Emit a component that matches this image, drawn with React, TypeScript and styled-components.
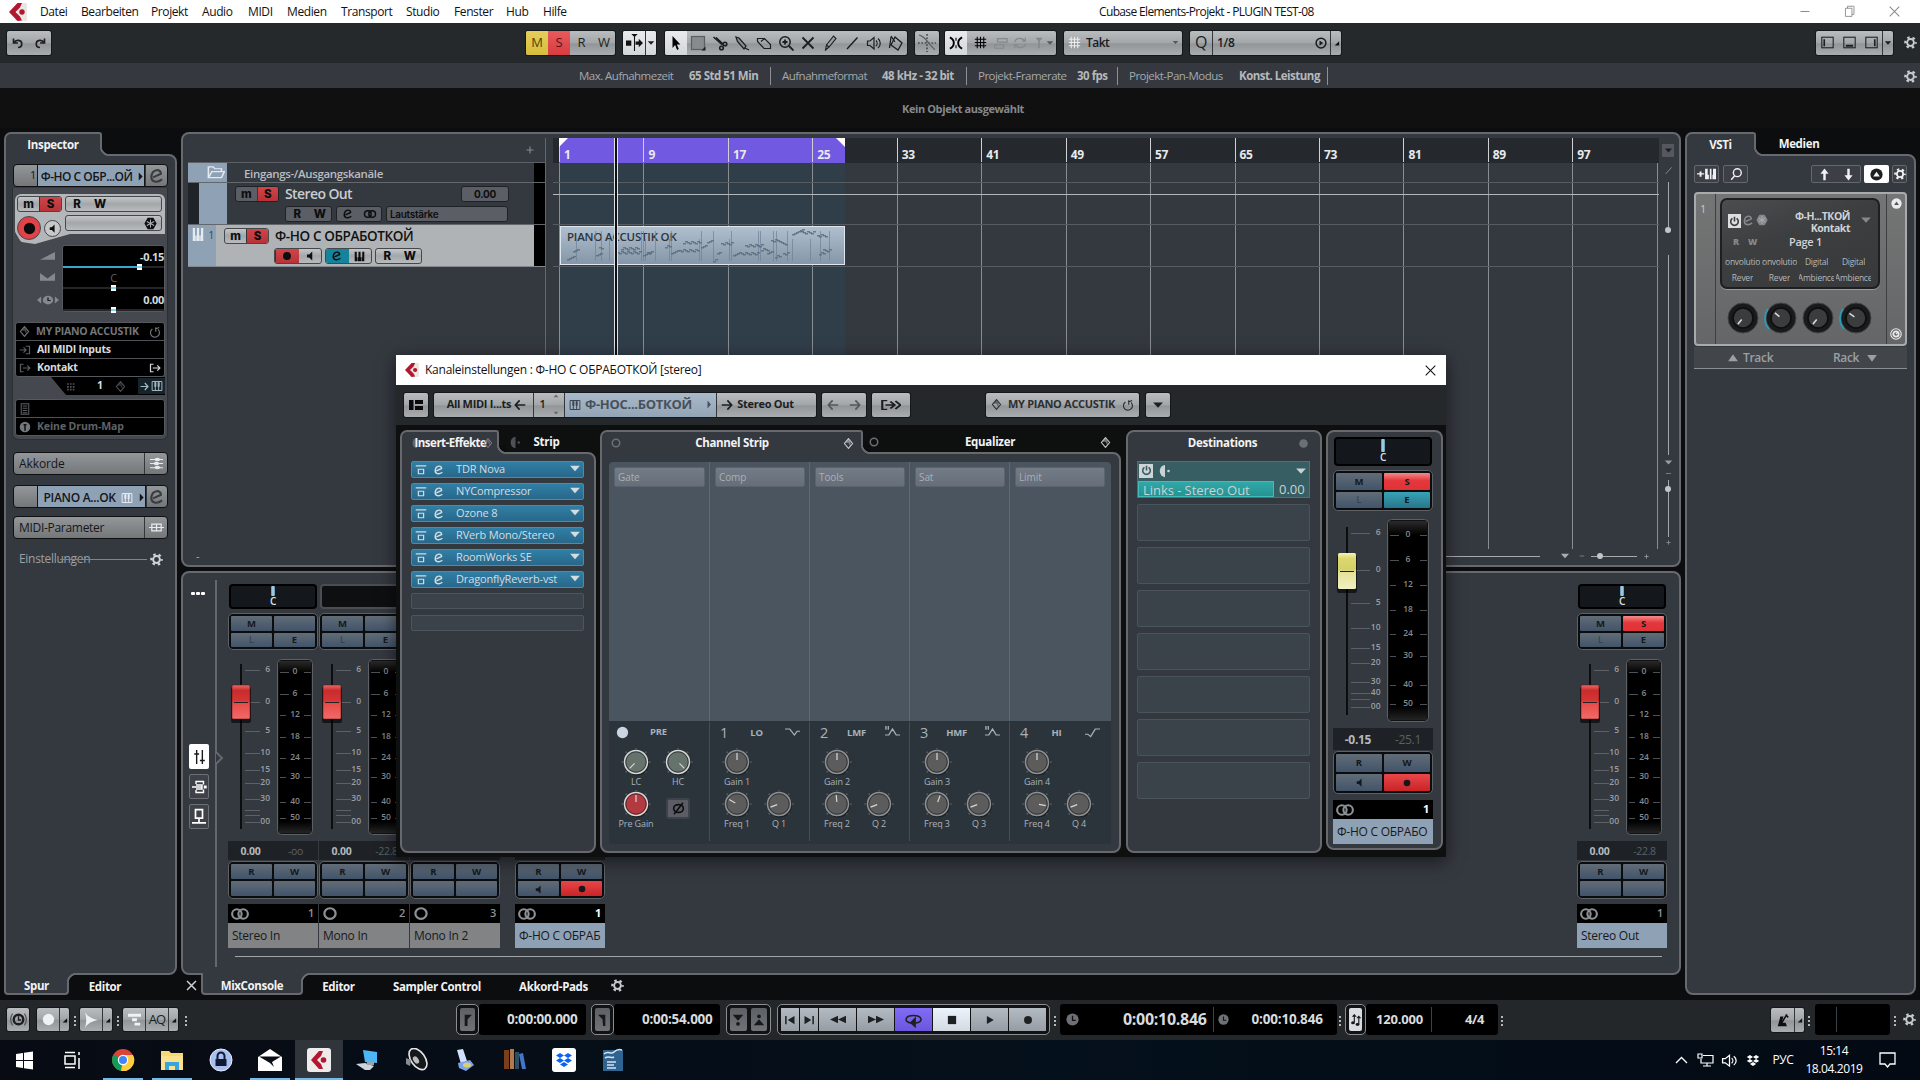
import React from "react";
import styled, { createGlobalStyle, css } from "styled-components";

const Global = createGlobalStyle`
  *{box-sizing:border-box}
  html,body{margin:0;padding:0;background:#0c0d0e;overflow:hidden}
  body{font-family:"Open Sans","Noto Sans",sans-serif;font-size:11px;letter-spacing:-0.3px;color:#c9cdd0;white-space:nowrap;line-height:1.1}
  svg{display:block;flex:none}
`;

const EDGE = "#67696f";
const PANEL = "#34383f";
const BLUE = "#8fa1b5";
const steel = "linear-gradient(#b9bdc0 0%,#a3a7aa 48%,#929699 54%,#a9adb0 100%)";

/* ---------- text ---------- */
const Txt = styled.span<{ $s?: number; $b?: number; $c?: string; $ls?: number; $ml?: number }>`
  font-size: ${(p) => p.$s ?? 11}px;
  font-weight: ${(p) => p.$b ?? 400};
  color: ${(p) => p.$c ?? "inherit"};
  letter-spacing: ${(p) => p.$ls ?? -0.3}px;
  margin-left: ${(p) => p.$ml ?? 0}px;
  flex: none;
`;

/* ---------- icons ---------- */
const shapes: Record<string, React.ReactNode> = {
  undo: <path d="M2 2v6h6M2.500 7.500C5 3 13 3.500 13 9c0 3.500-2.500 5-5 5" fill="none" stroke="currentColor" strokeWidth="2.200" />,
  redo: <path d="M14 2v6H8M13.500 7.500C11 3 3 3.500 3 9c0 3.500 2.500 5 5 5" fill="none" stroke="currentColor" strokeWidth="2.200" />,
  gear: (
    <g fill="none" stroke="currentColor">
      <circle cx="8" cy="8" r="4.200" strokeWidth="2.400" />
      <circle cx="8" cy="8" r="6.300" strokeWidth="2.800" strokeDasharray="3 3.597" strokeDashoffset="1.500" />
    </g>
  ),
  edit: <path d="M4.500 9.200L11.500 6C11.500 1.500 4 1.500 3 8c-.6 5.500 5 6.500 9.500 3" fill="none" stroke="currentColor" strokeWidth="1.900" />,
  keys: (
    <g fill="none" stroke="currentColor" strokeWidth="1.300">
      <path d="M1.500 2h13v12h-13zM5.800 3v11M10.200 3v11" />
      <path d="M5.800 3v6M10.200 3v6" strokeWidth="2.600" />
    </g>
  ),
  keysSolid: <path d="M1 1h3v8H5v6H1zM6.500 1h3v8h.8v6H5.700V9h.8zM12 1h3v14h-4V9h1z" fill="currentColor" />,
  arrow: <path d="M4 1v12l3-3 2.200 5 2-1-2.200-4.500H13z" fill="currentColor" />,
  range: (
    <g>
      <rect x="1.500" y="1.500" width="13" height="13" fill="#888b8e" stroke="#5c5f62" strokeWidth="1.200" />
      <path d="M15.500 11.500v4h-4z" fill="currentColor" />
    </g>
  ),
  split: <g fill="none" stroke="currentColor" strokeWidth="1.600"><path d="M1.500 2l9 8M4 2.500L11 9" /><circle cx="13" cy="9" r="1.800" /><circle cx="9.500" cy="13" r="1.800" /></g>,
  glue: <path d="M2 2l3 1 7 8-2 3L3.500 6.500zM11 13l4 2" fill="#8c9093" stroke="currentColor" strokeWidth="1.300" />,
  erase: <path d="M1.500 3.500h7l6 6v4H8l-6.500-7z M8.500 3.500L5 6.500" fill="none" stroke="currentColor" strokeWidth="1.200" />,
  zoom: <g fill="none" stroke="currentColor" strokeWidth="1.500"><circle cx="7" cy="7" r="5.200" /><path d="M4.500 7h5M7 4.500v5M11 11l4.500 4.500" strokeWidth="1.800" /></g>,
  cross: <path d="M2.500 2.500l11 11M13.500 2.500l-11 11" fill="none" stroke="currentColor" strokeWidth="1.800" />,
  pencil: <path d="M11.500 1l-7 9-1 5 3.500-3L14 3.500zM4.500 10l2.500 2" fill="#9a9ea1" stroke="currentColor" strokeWidth="1.100" />,
  line: <path d="M3 14L13.500 2.500" fill="none" stroke="currentColor" strokeWidth="1.400" />,
  speaker: <path d="M1.500 6v4.500h2.500l4 3.500V2.500L4 6zM10 5.500c1.500 1.500 1.500 4 0 5.500M12 3.500c3 2.500 3 7 0 9.500" fill="none" stroke="currentColor" strokeWidth="1.200" />,
  bucket: <path d="M7 2l7 6-4 7-7-5zM3 1l4 6M3 2L1.500 13" fill="none" stroke="currentColor" strokeWidth="1.300" />,
  xfade: <g fill="none" stroke="currentColor"><path d="M8 0v16M0 8h16" strokeDasharray="1.500 1.500" /><path d="M1 1c6 1 8 8 14 13" strokeWidth="1.200" stroke="#606468" /></g>,
  snap: <g fill="none" stroke="currentColor" strokeWidth="2.200"><path d="M1 1.500c3 1.500 4.500 3.500 4.500 6.500S4 13 1 14.500M15 1.500c-3 1.500-4.500 3.500-4.500 6.500s1.500 5 4.500 6.500" /><path d="M8 2v3.500M8 10.500V14" strokeWidth="1.300" /></g>,
  hash: <path d="M4 1v14M12 1v14M1 4h14M1 12h14M8 1v14M1 8h14" fill="none" stroke="currentColor" strokeWidth="1.300" />,
  gridrel: <path d="M4 3h11v4H4zM1 10h10v4H1z" fill="none" stroke="currentColor" strokeWidth="1.300" />,
  cycle2: <path d="M2 7c1-5 9-6 11-1M14 2v4h-4M14 9c-1 5-9 6-11 1M2 14v-4h4" fill="none" stroke="currentColor" strokeWidth="1.400" />,
  tee: <path d="M3 2h9L8.500 6v9h-2V6z" fill="currentColor" />,
  tri: <path d="M1.500 4.500h13L8 11.500z" fill="currentColor" />,
  triUp: <path d="M1.500 13h13L8 2z" fill="currentColor" />,
  triDn: <path d="M1.500 3h13L8 14z" fill="currentColor" />,
  triR: <path d="M4 1v14l9-7z" fill="currentColor" />,
  corner: <path d="M14 5v10H4z" fill="currentColor" />,
  autoscroll: <g fill="currentColor"><path d="M0 6h5v5H0zM9 7h3V4.500l4 4-4 4V10H9zM5 0h6L8 3z" /><path d="M7.500 2h1v14h-1z" /></g>,
  applyq: <g fill="none" stroke="currentColor" strokeWidth="2"><circle cx="8" cy="8" r="6.500" /><path d="M6 4.500v7L11 8z" fill="currentColor" stroke="none" /></g>,
  spk: <path d="M4 6h3l4-4v12L7 10H4z" fill="currentColor" />,
  dot: <circle cx="8" cy="8" r="5.300" fill="currentColor" />,
  ring: <circle cx="8" cy="8" r="5" fill="none" stroke="currentColor" strokeWidth="2" />,
  stereo: <g fill="none" stroke="currentColor" strokeWidth="1.700"><circle cx="5.500" cy="8" r="3.800" /><circle cx="10.500" cy="8" r="3.800" /></g>,
  freeze: <g><path d="M4.500 1h7L15.500 8l-4 7h-7L.5 8z" fill="currentColor" /><path d="M8 3v10M3.500 5.500l9 5M12.500 5.500l-9 5" stroke="#a9adb0" strokeWidth="1.300" /></g>,
  vol: <path d="M0 14L16 3v11z" fill="currentColor" />,
  pan: <path d="M0 3l8 8 8-8v11H0z" fill="currentColor" />,
  delay: <g fill="currentColor"><path d="M0 8l3-4v8zM16 8l-3-4v8z" /><ellipse cx="8" cy="8" rx="3.800" ry="5" /><path d="M8 5v3.500h2" stroke="#222" fill="none" /></g>,
  diamond: <g><path d="M8 .8L14 8l-6 7.200L2 8z" fill="none" stroke="currentColor" strokeWidth="1.500" /><path d="M8 1L3 7h5l3 6V6z" fill="currentColor" opacity=".55" /></g>,
  reload: <path d="M4.500 4A6 6 0 1 0 12 4.500M9 1.500v6M13.500 2l-5 2" fill="none" stroke="currentColor" strokeWidth="1.500" />,
  into: <path d="M1 8h8M6 4.500L9.500 8 6 11.500M9 3h5v10H9" fill="none" stroke="currentColor" strokeWidth="1.600" />,
  outof: <path d="M6 3H2v10h4M5 8h9M11 4.500L14.500 8 11 11.500" fill="none" stroke="currentColor" strokeWidth="1.600" />,
  grid9: <path d="M2 2h3v3H2zM7 2h3v3H7zM12 2h3v3h-3zM2 7h3v3H2zM7 7h3v3H7zM12 7h3v3h-3zM2 12h3v3H2zM7 12h3v3H7zM12 12h3v3h-3z" fill="currentColor" />,
  sheet: <path d="M3 1h10v14H3zM5 4h6M5 7h6M5 10h6M5 13h6" fill="none" stroke="currentColor" strokeWidth="1.400" />,
  drum: <g><circle cx="8" cy="8" r="7" fill="currentColor" /><path d="M8 5v8M6 5h4" stroke="#111" strokeWidth="2" /></g>,
  chords: <g fill="currentColor"><path d="M0 2.500h16v1.200H0zM0 7.500h16v1.200H0zM0 12.500h16v1.200H0z" /><ellipse cx="9" cy="3" rx="3.500" ry="2.100" /><ellipse cx="8" cy="8" rx="3.500" ry="2.100" /><ellipse cx="9" cy="13" rx="3.500" ry="2.100" /></g>,
  params: <path d="M0 8h16M3 4.500h10v7H3zM8 4.500v7" fill="none" stroke="currentColor" strokeWidth="1.300" />,
  folder: <path d="M2 13V2h4l1.500 2H13v3M2 13.500L5 7h10.500L13 13.500z" fill="none" stroke="currentColor" strokeWidth="1.300" />,
  mixer: <path d="M4.500 1v14M11.500 1v14M1.500 5h6M8.500 11.500h6" fill="none" stroke="currentColor" strokeWidth="1.700" />,
  inserts: <path d="M1 8h10M5 5V2.500h7.500v3M5 11v2.500h7.500v-3M13.500 7.200h1.500v1.600h-1.500zM5 6h6v4H5" fill="none" stroke="currentColor" strokeWidth="1.400" />,
  console: <path d="M4.500 1.500h7v8h-7zM8 10v3.500M1 14h14" fill="none" stroke="currentColor" strokeWidth="1.700" />,
  bypass: <path d="M1 2.500h14M4.500 7h7v6h-7z" fill="none" stroke="currentColor" strokeWidth="1.600" />,
  half: <g fill="currentColor"><path d="M8 1v14A6 7 0 0 1 8 1z" /><circle cx="12" cy="8" r="1.500" /></g>,
  power: <path d="M5 3.500a5.500 5.500 0 1 0 6 0M8 1v7" fill="none" stroke="currentColor" strokeWidth="2.300" />,
  arrL: <path d="M15 8H2M7.500 1.800L1.800 8l5.700 6.200" fill="none" stroke="currentColor" strokeWidth="2.200" />,
  arrR: <path d="M1 8h13M8.500 1.800L14.200 8l-5.700 6.200" fill="none" stroke="currentColor" strokeWidth="2.200" />,
  layout: <path d="M1 3h4.500v10H1zM7 3h8v4H7zM7 9h8v4H7z" fill="currentColor" />,
  search: <g fill="none" stroke="currentColor" strokeWidth="1.600"><circle cx="9.500" cy="6.500" r="4.500" /><path d="M6.500 10L2.500 14.500" /></g>,
  addkeys: <path d="M0 7h2.200V4.500h1.600V7H6v1.800H3.800v2.700H2.200V8.800H0zM6.800 1H9v8h1v6H6.800zM10.800 1h1.400v14h-1.400zM13.500 1H16v14h-3V9h.5z" fill="currentColor" />,
  up: <path d="M8 .5l5 6.500H9.500v8h-3V7H3z" fill="currentColor" />,
  down: <path d="M8 15.500L13 9H9.500V1h-3v8H3z" fill="currentColor" />,
  eject: <g><circle cx="8" cy="8" r="7.500" fill="currentColor" /><path d="M4 10.500h8L8 4.500z" fill="#f5f5f5" /></g>,
  ejectL: <g><circle cx="8" cy="8" r="7.500" fill="currentColor" /><path d="M4.500 10h7L8 5z" fill="#555" /></g>,
  dial: <g fill="none" stroke="currentColor" strokeWidth="1.500"><circle cx="8" cy="8" r="7" /><circle cx="8" cy="8" r="3.600" strokeWidth="2.400" /><path d="M8 8l3-3" /></g>,
  clock: <g><circle cx="8" cy="8" r="7.500" fill="currentColor" /><path d="M8 3.500V9h4" fill="none" stroke="#111" strokeWidth="1.600" /></g>,
  rtz: <path d="M1.500 2.500h2v11h-2zM14 2.500v11L5 8z" fill="currentColor" />,
  rte: <path d="M12.500 2.500h2v11h-2zM2 2.500v11l9-5.500z" fill="currentColor" />,
  rew: <path d="M8 2.500v11L0 8zM16 2.500v11L8 8z" fill="currentColor" />,
  ffw: <path d="M0 2.500v11L8 8zM8 2.500v11L16 8z" fill="currentColor" />,
  loop: <g fill="none" stroke="currentColor" strokeWidth="1.500"><path d="M6 11C-2 10 0 3.500 8 3.500s10 6.500 2 7.500" /><path d="M9.500 6.500v8L5.500 10.800z" fill="currentColor" /></g>,
  stop: <path d="M2.500 2.500h11v11h-11z" fill="currentColor" />,
  play: <path d="M3 1.500v13L14 8z" fill="currentColor" />,
  metro: <g><path d="M2 15L5 4h3.500L6.500 11H11l1.500 4z" fill="currentColor" /><path d="M6 12L12.500 1.500M11 2l3 3" stroke="currentColor" strokeWidth="1.700" fill="none" /></g>,
  locL: <path d="M3 1h13L8 7v9H3z" fill="currentColor" />,
  locR: <path d="M0 1h13v15H9L8 7z" fill="currentColor" />,
  punchI: <g fill="currentColor"><path d="M1 1h14L8 9z" /><circle cx="8" cy="13" r="2.500" /></g>,
  punchO: <g fill="currentColor"><path d="M1 15h14L8 7z" /><circle cx="8" cy="3" r="2.500" /></g>,
  constrain: <g fill="none" stroke="currentColor"><circle cx="8" cy="8" r="4.500" strokeWidth="2.200" /><path d="M8 5v3.500h2.500" strokeWidth="1.300" /><path d="M2.500 2.500C0 5.500 0 10.500 2.500 13.500M13.500 2.500c2.500 3 2.500 8 0 11" strokeWidth="1.200" stroke="#55585b" /></g>,
  burst: <path d="M0 0c2 3 5 6 16 8-11 2-14 5-16 8 2-5 2-11 0-16z" fill="currentColor" />,
  bars: <path d="M0 1h16v3.500H0zM5 6.500h6v3.500H5zM8 12h7v3.500H8z" fill="currentColor" />,
  note: <g fill="currentColor"><path d="M5 1h1.500v10H5zM11 4h1.500v10H11z" /><ellipse cx="4" cy="11.500" rx="2.500" ry="2" /><ellipse cx="10" cy="14" rx="2.500" ry="1.900" /><path d="M2.500 3.500L5.700 0 9 3.500zM8.500 5.500L11.700 2 15 5.500z" /></g>,
  winL: <g fill="none" stroke="currentColor" strokeWidth="1.300"><rect x="1" y="1.500" width="14" height="13" /><path d="M4 4v8.500" strokeWidth="2" /></g>,
  winB: <g fill="none" stroke="currentColor" strokeWidth="1.300"><rect x="1" y="1.500" width="14" height="13" /><path d="M3.500 12h9" strokeWidth="2.400" /></g>,
  winR: <g fill="none" stroke="currentColor" strokeWidth="1.300"><rect x="1" y="1.500" width="14" height="13" /><path d="M12 4v8.500" strokeWidth="2" /></g>,
  phase: <g fill="none" stroke="currentColor" strokeWidth="2"><ellipse cx="8" cy="8" rx="6" ry="4.800" /><path d="M2.500 15L13.500 1" /></g>,
  loShelf: <path d="M0 4h5l5 8 3-5h3" fill="none" stroke="currentColor" strokeWidth="1.400" />,
  hiShelf: <path d="M0 11h3l3 3 5-10h5" fill="none" stroke="currentColor" strokeWidth="1.400" />,
  bell: <path d="M1 0v5M3.500 0v5M0 12h4l4-8 4 8h4" fill="none" stroke="currentColor" strokeWidth="1.400" />,
  goto: <path d="M5 3H1v10h4M3.500 8h7M7.500 4L11 8l-3.500 4M11.500 3.500L15.500 8l-4 4.500" fill="none" stroke="currentColor" strokeWidth="1.700" />,
  minus: <path d="M2 8h12" stroke="currentColor" strokeWidth="1.500" />,
  plus: <path d="M1 8h14M8 1v14" stroke="currentColor" strokeWidth="2.200" />,
  restore: <path d="M3 4h8v10H3zM5.500 4V1.500h8V11.500H11" fill="none" stroke="currentColor" strokeWidth="1.100" />,
  thinX: <path d="M1 1l14 14M15 1L1 15" fill="none" stroke="currentColor" strokeWidth="1.500" />,
};
type IconProps = { n: string; s?: number; w?: number; h?: number; c?: string };
const Icon = ({ n, s = 14, w, h, c = "currentColor" }: IconProps) => (
  <svg width={w ?? s} height={h ?? s} viewBox="0 0 16 16" preserveAspectRatio="none" style={{ color: c }}>
    {shapes[n]}
  </svg>
);
const CubaseLogo = ({ s = 18 }: { s?: number }) => (
  <svg width={s} height={s} viewBox="0 0 18 18">
    <path d="M10 0h8v18H6z" fill="#e9e6e4" />
    <path d="M0 9L8.500 0 13 0 11 4.500 6.500 9 11 13.500 13 17.500 8.500 18z" fill="#b3162f" />
    <circle cx="13" cy="9" r="2.700" fill="#b3162f" />
  </svg>
);

/* ---------- app frame ---------- */
const Screen = styled.div`
  position: relative; width: 1920px; height: 1080px; display: flex; flex-direction: column; overflow: hidden; background: #0c0d0e;
`;
const MenuBar = styled.div`
  height: 23px; background: #fff; color: #111; display: flex; align-items: center; padding-left: 9px; font-size: 12px;
`;
const MenuItem = styled.span<{ $w: number }>`width: ${(p) => p.$w}px; flex: none; font-size: 12px; letter-spacing: -0.4px;`;
const WinCtl = styled.div<{ $ml?: number }>`margin-left: ${(p) => p.$ml ?? 0}px; width: 11px; color: #8a8a8a; height: 16px; display:flex;align-items:center;`;

const ToolBar = styled.div`height: 40px; background: #25292c; display: flex; align-items: center; padding: 0 0 1px 7px;`;
const Group = styled.div<{ $w: number; $ml?: number; $h?: number }>`
  width: ${(p) => p.$w}px; margin-left: ${(p) => p.$ml ?? 0}px; height: ${(p) => p.$h ?? 24}px; flex: none;
  display: flex; background: ${steel}; border-radius: 2px; overflow: hidden; box-shadow: 0 0 0 1px #15181a;
`;
const tones: Record<string, string> = {
  light: "linear-gradient(#e8eaec,#d4d7d9)",
  yellow: "linear-gradient(#e6ce5c,#d6bd3c)",
  red: "linear-gradient(#e85a5c,#d83c40)",
  blue: "linear-gradient(#a9b9c9,#93a4b6)",
};
const Btn = styled.div<{ $w?: number; $t?: string; $c?: string; $sep?: boolean }>`
  ${(p) => (p.$w ? `width:${p.$w}px;flex:none` : "flex:1")};
  display: flex; align-items: center; justify-content: center; color: ${(p) => p.$c ?? "#1c1e20"};
  background: ${(p) => (p.$t ? tones[p.$t] : "none")};
  ${(p) => p.$sep && "border-left:1px solid #33373a;"}
  font-size: 13px;
`;
const Field = styled.div<{ $w: number; $sep?: boolean }>`
  width: ${(p) => p.$w}px; display: flex; align-items: center; padding: 0 3px 0 4px; color: #1a1c1e; font-weight: 600; font-size: 12px;
  ${(p) => p.$sep && "border-left:1px solid #33373a;"}
  & > :last-child { margin-left: auto; }
`;
const Push = styled.div`flex: 1;`;
const InfoLine = styled.div`height: 25px; background: #35393f; display: flex; align-items: center; padding: 1px 0 0 579px; color: #a4a8ab;`;
const InfoKey = styled.span<{ $w: number }>`width: ${(p) => p.$w}px; font-size: 11.500px; letter-spacing: -0.53px; flex: none;`;
const InfoVal = styled.span<{ $w: number }>`width: ${(p) => p.$w}px; font-size: 11.500px; letter-spacing: -0.5px; font-weight: 700; color: #b4b8bb; flex: none;
  height: 18px; line-height: 18px; border-right: 1px solid #8d9194; margin-right: 11px;`;
const StatusLine = styled.div`height: 40px; background: #101010; padding: 2px 0 0 6px; display: flex; align-items: center; justify-content: center; color: #85888b; font-weight: 700; font-size: 11px; letter-spacing:-0.4px;`;

const Workspace = styled.div`height: 872px; display: flex; gap: 4px; padding: 4px 4px 5px; background: #0c0d0e;`;
const Zone = styled.div<{ $w: number }>`width: ${(p) => p.$w}px; flex: none; display: flex; flex-direction: column;`;
const TabRow = styled.div<{ $h?: number }>`height: ${(p) => p.$h ?? 22}px; display: flex; flex: none; align-items: stretch;`;
const Tab = styled.div<{ $w: number; $on?: boolean; $bottom?: boolean; $ml?: number; $pt?: number }>`
  width: ${(p) => p.$w}px; margin-left: ${(p) => p.$ml ?? 0}px; flex: none; color: #f1f2f3; font-weight: 700; font-size: 11.500px; letter-spacing: -0.35px;
  display: flex; align-items: center; justify-content: center; padding-top: ${(p) => p.$pt ?? (p.$bottom ? 5 : p.$on ? 0 : 3)}px;
  ${(p) =>
    p.$on &&
    css`
      background: ${PANEL}; position: relative; z-index: 1; border: 2px solid ${EDGE};
      ${p.$bottom
        ? "border-top:0;border-radius:0 0 4px 4px;margin-top:-2px;padding-top:7px;"
        : "border-bottom:0;border-radius:7px 3px 0 0;margin-bottom:-2px;"}
      &::after {
        content: ""; position: absolute; right: -9px; ${p.$bottom ? "top:0" : "bottom:0"}; width: 9px; height: 9px;
        background: radial-gradient(circle at 100% ${p.$bottom ? "100%" : "0"}, #0c0d0e 6.700px, ${EDGE} 7.200px 8.800px, ${PANEL} 9.300px);
      }
    `}
`;
const Panel = styled.div<{ $r?: string }>`
  flex: 1; min-height: 0; background: ${PANEL}; border: 2px solid ${EDGE}; border-radius: ${(p) => p.$r ?? "8px"};
  display: flex; flex-direction: column;
`;

/* ---------- inspector ---------- */
const InspBar = styled.div<{ $mt: number }>`
  height: 23px; margin: ${(p) => p.$mt}px 7px 0; flex: none; display: flex; border: 1px solid #111; border-radius: 4px; overflow: hidden;
  background: linear-gradient(#94979a,#74777a);
`;
const InspCell = styled.div<{ $w?: number; $blue?: boolean; $end?: boolean }>`
  ${(p) => (p.$w ? `width:${p.$w}px` : "flex:1")}; display: flex; align-items: center; color: #14161a; font-size: 12px; gap: 5px;
  ${(p) => p.$blue && `background:${BLUE};border:solid #14161a;border-width:0 1px;font-weight:600;padding-top:2px;`}
  ${(p) => p.$end ? "justify-content:center;border-left:1px solid #33363a;color:#e8eaec;" : ""}
  padding-left: ${(p) => (p.$end ? 0 : 5)}px;
`;
const InspSection = styled.div`
  height: 252px; margin: 1px 7px 0 6px; background: #45484e; flex: none; padding: 6px 2px 0 2px; border: solid #2b2e33; border-width: 0 1px 1px; border-radius: 0 0 6px 6px;
`;
const InspDeck = styled.div`
  height: 50px; width: 150px; background: #b4b7ba; border-radius: 6px 6px 4px 14px; padding: 2px; display: grid; grid-template-columns: 45px 97px; column-gap: 3px; row-gap: 2px; grid-template-rows: 17px 26px;
  clip-path: polygon(0 0,100% 0,100% 40px,55px 40px,20px 100%,6px 96%,0 38px);
`;
const Pill = styled.div<{ $dark?: boolean; $w?: number; $h?: number; $ml?: number }>`
  height: ${(p) => p.$h ?? 16}px; ${(p) => p.$w && `width:${p.$w}px;`} margin-left: ${(p) => p.$ml ?? 0}px; flex: none; display: flex; border: 1px solid ${(p) => (p.$dark ? "#1f2225" : "#44474b")}; border-radius: 3px; overflow: hidden;
  background: ${(p) => (p.$dark ? "#5b5f65" : "linear-gradient(#c3c5c7,#a4a7a9 50%,#b9bbbd)")};
  color: #0d0e10; font-family: "Inter","Open Sans",sans-serif; font-weight: 800; font-size: 11.500px; letter-spacing: 0;
`;
const PillCell = styled.div<{ $t?: "red" | "teal"; $w?: number }>`
  ${(p) => (p.$w ? `width:${p.$w}px` : "flex:1")}; display: flex; align-items: center; justify-content: center;
  ${(p) => p.$t === "red" && "background:linear-gradient(#cf4549,#b73338);border-left:1px solid #33363a;"}
  ${(p) => p.$t === "teal" && "background:#14839b;"}
`;
const RoundRow = styled.div`display: flex; align-items: center; gap: 3px;`;
const Round = styled.div<{ $s: number; $red?: boolean }>`
  width: ${(p) => p.$s}px; height: ${(p) => p.$s}px; border-radius: 50%; display: flex; align-items: center; justify-content: center; color: #0b0b0c;
  background: ${(p) => (p.$red ? "radial-gradient(#e8484c,#dd4146 70%,#f08a8a)" : "#c6c8ca")}; border: 1px solid #44474b;
`;
const ValueDeck = styled.div`display: flex; margin-top: 1px; height: 67px;`;
const ValueIcons = styled.div`width: 47px; padding-left: 18px; display: flex; flex-direction: column; justify-content: space-around; align-items: center; color: #85888c;`;
const ValueBox = styled.div`flex: 1; background: #000; border-radius: 3px; border: 1px solid #55585d; display: flex; flex-direction: column;`;
const ValueLine = styled.div<{ $mid?: boolean }>`
  height: 21.600px; display: flex; align-items: flex-end; justify-content: ${(p) => (p.$mid ? "center" : "flex-end")};
  color: ${(p) => (p.$mid ? "#5b5e62" : "#d5d8da")}; font-weight: ${(p) => (p.$mid ? 400 : 700)}; font-size: 11px; line-height: 12px; padding-bottom: 3px; padding-top: 3px;
  border-bottom: 2px solid #232528; position: relative;
`;
const Handle = styled.i<{ $x: number; $fill?: boolean }>`
  position: absolute; left: ${(p) => p.$x}px; bottom: -4px; width: 5px; height: 6px; background: linear-gradient(#fff 30%,#7fd4f0 30% 70%,#fff 70%);
  ${(p) => p.$fill && `&::before{content:"";position:absolute;right:5px;top:2px;width:${p.$x}px;height:2px;background:#3aa7d0;}`}
`;
const ListBox = styled.div<{ $mt: number }>`margin-top: ${(p) => p.$mt}px; background: #000; border-radius: 3px; border: 1px solid #55585d;`;
const ListRow = styled.div<{ $dim?: boolean; $h?: number }>`
  height: ${(p) => p.$h ?? 18}px; display: flex; align-items: center; padding: 0 3px; gap: 6px; font-weight: 700; font-size: 10.500px; color: ${(p) => (p.$dim ? "#74777b" : "#d9dcde")};
  letter-spacing: -0.25px; & + & { border-top: 1px solid #4e5156; } & > svg:last-child:not(:first-child) { margin-left: auto; }
`;
const ChanRow = styled.div`
  height: 18px; margin-left: 36px; background: #000; display: flex; align-items: center; padding-left: 15px; clip-path: polygon(0 0,100% 0,100% 100%,15px 100%); color: #4e5156;
`;
const RouteKeys = styled.div`margin-left: 12px; height: 16px; width: 27px; background: #16232b; display: flex; align-items: center; justify-content: center; gap: 2px; color: #a7bac4;`;
const SettingsRow = styled.div`display: flex; align-items: center; margin: 11px 0 0 13px; height: 18px; color: #9da0a3;`;
const Rule = styled.div<{ $w?: number; $ml?: number; $c?: string }>`height: 1px; ${(p) => (p.$w ? `width:${p.$w}px;flex:none` : "flex:1")}; margin-left: ${(p) => p.$ml ?? 0}px; background: ${(p) => p.$c ?? "#808387"};`;

/* ---------- track list ---------- */
const ArrangePanel = styled(Panel)`flex: none; height: 435px;`;
const ArrRow = styled.div`flex: 1; min-height: 0; display: flex; padding-left: 5px;`;
const TrackList = styled.div`width: 358px; flex: none; border-right: 1px solid #63666b; display: flex; flex-direction: column; margin-top: 4px;`;
const ListHead = styled.div`height: 25px; display: flex; align-items: center; justify-content: flex-end; padding-right: 11px; color: #888b8f; border-bottom: 1px solid #5d6065; flex: none;`;
const TrackRow = styled.div<{ $h: number; $sel?: boolean }>`
  height: ${(p) => p.$h}px; flex: none; display: flex; border-bottom: 1px solid ${(p) => (p.$sel ? "#85898d" : "#63676b")}; background: ${(p) => (p.$sel ? "#b0b3b5" : PANEL)};
`;
const Stripe = styled.div<{ $w: number; $c?: string }>`width: ${(p) => p.$w}px; flex: none; background: ${(p) => p.$c ?? BLUE}; display: flex; align-items: flex-start; justify-content: flex-end; gap: 5px; color: #e3eaf0; padding: 2px;`;
const TrackMain = styled.div<{ $pl: number }>`flex: 1; padding: 3px 0 0 ${(p) => p.$pl}px; display: flex; flex-direction: column; gap: 4px;`;
const TrackLine = styled.div<{ $ml?: number; $gap?: number }>`display: flex; align-items: center; gap: ${(p) => p.$gap ?? 4}px; margin-left: ${(p) => p.$ml ?? 0}px; height: 16px;`;
const MeterStub = styled.div`width: 11px; flex: none; background: #000;`;

/* ---------- timeline ---------- */
const Timeline = styled.div`width: 1106px; margin: 4px 0 0 7px; flex: none; display: flex; flex-direction: column; position: relative; height: 411px;`;
const Ruler = styled.div`height: 25px; flex: none; display: flex; padding-left: 6px; background: linear-gradient(90deg,#25292d 6px,#7259e2 6px 292px,#25292d 292px);`;
const Bar = styled.div`width: 84.450px; flex: none; border-left: 1px solid #cfd1d3; height: 24px; padding: 11px 0 0 4px; color: #e8eaeb; font-weight: 700; font-size: 12px; line-height: 12px;`;
const LaneArea = styled.div`flex: 1; position: relative; background: linear-gradient(90deg,transparent 6px,#303e4a 6px 292px,transparent 292px);`;
const GridCols = styled.div`position: absolute; inset: 0; display: flex; padding-left: 6px;`;
const GridCol = styled.div`width: 84.450px; flex: none; border-left: 1px solid #898d91;`;
const Lane = styled.div<{ $h: number; $c?: string }>`height: ${(p) => p.$h}px; border-bottom: 1px solid ${(p) => p.$c ?? "#565c60"}; position: relative;`;
const Clip = styled.div`
  margin-left: 7px; width: 285px; height: 39px; position: relative; top: 1px; border: 1px solid #dbe6f0; background: linear-gradient(#afbfce,#8596a8);
  color: #2d343b; font-weight: 600; font-size: 11.500px; padding: 4px 0 0 6px; letter-spacing: -0.2px;
`;
const ClipNotes = styled.svg`position: absolute; left: 0; top: 0;`;
const Playhead = styled.div`position: absolute; left: 61px; top: 0; bottom: 0; width: 4px; background: #0e1013; border: solid #dfe2e4; border-width: 0 1px;`;
const LoopMark = styled.div<{ $x: number; $flip?: boolean }>`position: absolute; top: 0; left: ${(p) => p.$x}px; border: 9px solid transparent; border-width: 9px 9px 0 0; border-top-color: #fff; ${(p) => p.$flip && "transform:scaleX(-1);"}`;
const VScroll = styled.div`width: 14px; margin: 10px 0 0 2px; display: flex; flex-direction: column; align-items: center; color: #9a9da1; flex: none;`;
const DropBox = styled.div`width: 12px; height: 13px; background: #55595f; display: flex; align-items: center; justify-content: center; color: #1c1e20;`;
const VLine = styled.div<{ $h: number; $mt?: number }>`width: 1px; height: ${(p) => p.$h}px; margin-top: ${(p) => p.$mt ?? 0}px; background: #a5a8ab; flex: none;`;
const Knot = styled.div`width: 6px; height: 6px; border-radius: 50%; background: #c3c6c8; flex: none;`;
const HScroll = styled.div`height: 16px; flex: none; display: flex; align-items: center; color: #aaaeb1; padding: 0 0 0 13px; margin-bottom: 1px;`;

/* ---------- mixer ---------- */
const MixPanel = styled(Panel)`margin-top: 4px;`;
const MixBody = styled.div`flex: 1; min-height: 0; display: flex;`;
const MixRail = styled.div`width: 34px; margin-top: 7px; height: 387px; border-right: 2px solid #64676c; padding: 2px 6px 0 6px; display: flex; flex-direction: column; gap: 5px; color: #fff; font-weight: 700; flex:none;`;
const RailDots = styled.div`height: 157px; padding: 10px 0 0 2px; display: flex; gap: 1px; & i { width: 4px; height: 3px; background: #fff; border-radius: 1px; }`;
const RailBtn = styled.div<{ $on?: boolean }>`
  width: 20px; height: 25px; flex: none; border-radius: 2px; display: flex; align-items: center; justify-content: center;
  ${(p) => (p.$on ? "background:#fff;color:#17191b;" : "background:#3e4248;border:1px solid #6c7075;color:#fff;")}
`;
const RailNotch = styled.div`width: 9px; margin-left: -7px; padding-top: 178px;`;
const Strips = styled.div`display: flex; margin-top: 11px;`;
const Strip = styled.div<{ $w: number; $ml?: number }>`width: ${(p) => p.$w}px; margin-left: ${(p) => p.$ml ?? 0}px; flex: none; display: flex; flex-direction: column;`;
const PanBox = styled.div<{ $h: number; $off?: boolean }>`
  height: ${(p) => p.$h}px; margin: 0 1px; flex: none; border: 2px solid ${(p) => (p.$off ? "#4a4d52" : "#000")}; background: ${(p) => (p.$off ? "#0d0f10" : "#14181c")}; border-radius: 4px;
  display: flex; flex-direction: column; align-items: center; color: #dfe2e4; font-size: 10px; font-weight: 600; line-height: 11px;
  & i { width: 4px; height: ${(p) => p.$h / 2 - 2}px; background: linear-gradient(90deg,#5b8fae,#b4dbef,#5b8fae); border-radius: 1px; }
`;
const Block = styled.div<{ $h: number; $mt: number }>`
  height: ${(p) => p.$h}px; margin-top: ${(p) => p.$mt}px; flex: none; display: grid; grid-template: 1fr 1fr / 1fr 1fr; gap: 2px; padding: 2px; background: #0b0c0e; border: 1px solid #5d6065; border-radius: 5px;
`;
const blockTones: Record<string, string> = {
  red: "linear-gradient(#f28a8a,#e4373b 45%,#e03338)",
  rec: "linear-gradient(#e8474a,#c92428)",
  teal: "linear-gradient(#38a2b6,#27768a)",
};
const BlockBtn = styled.div<{ $t?: string; $dim?: boolean }>`
  background: ${(p) => (p.$t ? blockTones[p.$t] : "linear-gradient(#616c77,#42546a)")}; display: flex; align-items: center; justify-content: center; padding-top: 1px;
  border-radius: 1px; color: ${(p) => (p.$dim ? "#343c45" : "#15181b")}; font-weight: ${(p) => (p.$dim ? 400 : 700)}; font-size: 9.500px; letter-spacing: 0;
`;
const Values = styled.div<{ $h: number; $mt: number; $s: number }>`
  height: ${(p) => p.$h}px; margin-top: ${(p) => p.$mt}px; background: #1e2226; display: grid; grid-template-columns: 1fr 1fr; align-items: center; text-align: center; flex: none;
  font-size: ${(p) => p.$s}px; font-weight: 700; color: #b5b9bc; padding-top: 2px; & span + span { font-weight: 400; color: #5c6064; }
`;
const ChanHead = styled.div<{ $mt: number; $sel?: boolean }>`
  height: 19px; margin-top: ${(p) => p.$mt}px; background: #000; flex: none; display: flex; align-items: center; justify-content: space-between; padding: 0 4px 0 2px; color: ${(p) => (p.$sel ? "#fff" : "#8d9194")}; font-size: 11px; font-weight: ${(p) => (p.$sel ? 700 : 600)};
`;
const ChanName = styled.div<{ $in?: boolean }>`height: 25px; flex: none; background: ${(p) => (p.$in ? "#828385" : BLUE)}; color: #17191c; font-size: 12px; padding: 1px 4px 0; display: flex; align-items: center; overflow: hidden; letter-spacing: -0.25px;`;

type Marks = [number, string][];
const SM = {
  w: 90, h: 191, x: 13, t: 14, b: 179, tx: 17, tw: 15, lx: 42,
  cap: [4, 35, 18, 34],
  ticks: [[20, "6"], [52, "0"], [81, "5"], [103, "10"], [120, "15"], [133, "20"], [149, "30"], [160, ""], [165, ""], [172, "00"]] as Marks,
  m: [49, 9, 35, 175],
  mt: [[22, "0"], [44, "6"], [65, "12"], [87, "18"], [108, "24"], [127, "30"], [152, "40"], [168, "50"]] as Marks,
};
const LG = {
  w: 100, h: 217, x: 14, t: 16, b: 204, tx: 18, tw: 19, lx: 47.500,
  cap: [5, 42, 18, 36],
  ticks: [[22, "6"], [59, "0"], [92, "5"], [117, "10"], [137, "15"], [152, "20"], [171, "30"], [182, "40"], [188, ""], [196, "00"]] as Marks,
  m: [54, 8, 41, 202],
  mt: [[24, "0"], [49, "6"], [74, "12"], [99, "18"], [123, "24"], [145, "30"], [174, "40"], [193, "50"]] as Marks,
};
const Fader = ({ g, yellow }: { g: typeof SM; yellow?: boolean }) => {
  const [cx, cy, cw, ch] = g.cap;
  const [mx, my, mw, mh] = g.m;
  const id = yellow ? "capY" : "capR";
  return (
    <svg width={g.w} height={g.h} fontFamily="Open Sans" fontWeight="600" fontSize="8.500" letterSpacing="0">
      <defs>
        <linearGradient id={id} x1="0" y1="0" x2="0" y2="1">
          {yellow ? (
            <><stop offset="0" stopColor="#f6f4b4" /><stop offset=".15" stopColor="#dcd86e" /><stop offset=".45" stopColor="#d3d06a" /><stop offset=".55" stopColor="#e4e29c" /><stop offset="1" stopColor="#f2f0c0" /></>
          ) : (
            <><stop offset="0" stopColor="#ee6a68" /><stop offset=".16" stopColor="#c82c2c" /><stop offset=".45" stopColor="#d63434" /><stop offset=".55" stopColor="#e84c4a" /><stop offset="1" stopColor="#f06b68" /></>
          )}
        </linearGradient>
        <linearGradient id="well" x1="0" y1="0" x2="0" y2="1">
          <stop offset="0" stopColor="#2a2a2a" /><stop offset=".07" stopColor="#000" /><stop offset=".93" stopColor="#000" /><stop offset="1" stopColor="#242424" />
        </linearGradient>
      </defs>
      <rect x={g.x - 1} y={g.t} width="2" height={g.b - g.t} fill="#0c0d0f" />
      {g.ticks.map(([y, l], i) => (
        <g key={i}>
          <rect x={g.tx} y={y} width={g.tw} height="1" fill="#5d6166" />
          <text x={g.lx} y={y + 2} textAnchor="end" fill="#9a9ea2">{l}</text>
        </g>
      ))}
      <rect x={cx - 1} y={cy + 2} width={cw + 2} height={ch + 2} rx="2" fill="#000" opacity=".6" />
      <rect x={cx} y={cy} width={cw} height={ch} rx="1.500" fill={`url(#${id})`} stroke="#5a1212" strokeWidth={yellow ? 0 : 0.5} />
      <rect x={cx + 2} y={cy + ch / 2} width={cw - 4} height="1" fill="#222" />
      <rect x={mx + 0.5} y={my + 0.5} width={mw} height={mh} rx="4" fill="#111" stroke="#5d6065" />
      <rect x={mx + 2} y={my + 2} width={mw - 3} height={mh - 3} fill="url(#well)" />
      {g.mt.map(([y, l], i) => (
        <g key={i}>
          <rect x={mx + 3} y={y} width={l.length > 1 ? 6 : 9} height="1" fill="#4d5155" />
          <rect x={mx + mw - 8} y={y} width="7" height="1" fill="#4d5155" />
          <text x={mx + mw / 2 + 0.5} y={y + 2} textAnchor="middle" fill="#85898d">{l}</text>
        </g>
      ))}
    </svg>
  );
};
type ChanProps = {
  name: string; num: string; peak: string; vol?: string; big?: boolean; mono?: boolean; input?: boolean; solo?: boolean; edit?: boolean; armed?: boolean; ml?: number;
};
const Channel = ({ name, num, peak, vol = "0.00", big, mono, input, solo, edit, armed, ml }: ChanProps) => {
  const g = big ? LG : SM;
  return (
    <Strip $w={g.w} $ml={ml}>
      <PanBox $h={big ? 29 : 25} $off={mono}>{!mono && (<><i /><span>C</span></>)}</PanBox>
      <Block $h={big ? 41 : 37} $mt={4}>
        <BlockBtn>M</BlockBtn>
        <BlockBtn $t={solo ? "red" : undefined}>{solo ? "S" : ""}</BlockBtn>
        <BlockBtn $dim>L</BlockBtn>
        <BlockBtn $t={edit ? "teal" : undefined}>E</BlockBtn>
      </Block>
      <Fader g={g} yellow={big} />
      <Values $h={big ? 22 : 19} $mt={0} $s={big ? 12 : 10.5}><span>{vol}</span><span>{peak}</span></Values>
      <Block $h={big ? 43 : 38} $mt={1}>
        <BlockBtn>R</BlockBtn>
        <BlockBtn>W</BlockBtn>
        <BlockBtn>{armed && <Icon n="spk" s={11} />}</BlockBtn>
        <BlockBtn $t={armed ? "rec" : undefined}>{armed && <Icon n="dot" s={10} />}</BlockBtn>
      </Block>
      <ChanHead $mt={big ? 6 : 5} $sel={armed}><Icon n={mono ? "ring" : "stereo"} w={mono ? 18 : 20} h={mono ? 17 : 20} c="#8d9194" />{num}</ChanHead>
      <ChanName $in={input}>{name}</ChanName>
    </Strip>
  );
};

/* ---------- dialog ---------- */
const Dialog = styled.div`position: absolute; left: 396px; top: 355px; width: 1050px; height: 502px; background: #0e0f0f; box-shadow: 0 4px 16px rgba(0,0,0,.55); display: flex; flex-direction: column; z-index: 5;`;
const DlgTitle = styled.div`height: 30px; background: #fff; color: #111; display: flex; align-items: center; padding: 0 10px 0 9px; gap: 6px;`;
const DlgBar = styled.div`height: 40px; background: #25282b; display: flex; align-items: center; padding: 0 0 1px 8px;`;
const DlgBody = styled.div`flex: 1; display: flex; padding: 5px 0 4px 4px; gap: 4px;`;
const DlgCol = styled.div<{ $w: number; $ml?: number }>`width: ${(p) => p.$w}px; margin-left: ${(p) => p.$ml ?? 0}px; flex: none; display: flex; flex-direction: column;`;
const TabInner = styled.div<{ $w: number; $pl?: number }>`width: ${(p) => p.$w}px; flex: none; padding: 0 6px 0 ${(p) => p.$pl ?? 8}px; display: flex; align-items: center; justify-content: space-between; color: #85898d; & > span { color: #f2f3f4; }`;
const Slots = styled.div`padding: 7px 10px 7px 9px; display: flex; flex-direction: column; gap: 5px;`;
const Insert = styled.div<{ $on?: boolean }>`
  height: ${(p) => (p.$on ? 17 : 16)}px; margin-bottom: ${(p) => (p.$on ? 0 : 1)}px; border: 1px solid ${(p) => (p.$on ? "#3e90b8" : "#4d565e")}; border-radius: 2px; background: ${(p) => (p.$on ? "linear-gradient(#317ea5,#28688b)" : "#3b4249")};
  display: flex; align-items: center; padding: 0 2px 0 3px; color: #d5dce0; font-size: 11px; gap: 6px; letter-spacing: -0.1px; & > svg:last-child { margin: -2px 0 0 auto; }
`;
const StripArea = styled.div`margin: 8px 8px 0 7px; width: 502px; height: 259px; background: #4b555f; border-radius: 4px 4px 0 0; display: grid; grid-template-columns: repeat(5,100px); flex: none;`;
const StripCol = styled.div`& + & { border-left: 1px solid #5f6973; } padding: 5px 4px 0 5px;`;
const Module = styled.div`height: 20px; background: linear-gradient(#737b86,#666e79); border: 1px solid #5b646e; border-radius: 2px; color: #a9b0b6; font-size: 10px; padding: 1px 3px 0; display: flex; align-items: center; letter-spacing:-.1px;`;
const EqArea = styled.div`margin: 0 8px 0 7px; width: 502px; height: 123px; background: #2c343b; border-radius: 0 0 4px 4px; display: grid; grid-template-columns: repeat(5,100px); padding: 1px 0 3px;`;
const EqCol = styled.div`& + & { border-left: 1px solid #454d55; } display: flex; flex-direction: column;`;
const EqHead = styled.div<{ $pre?: boolean }>`
  height: 26px; padding: ${(p) => (p.$pre ? "0 42px 6px 5px" : "0 9px 4px 10px")}; display: flex; align-items: center; justify-content: space-between; color: #a6b2bc; font-weight: 700; font-size: 9.500px; letter-spacing: -.2px;
  & big { font-size: 14.500px; font-weight: 400; } & > svg:last-child { margin-top: -3px; }
`;
const KnobRow = styled.div`display: grid; grid-template-columns: 42px 42px; margin-left: 6px; height: 42px; justify-items: center;`;
const KnobCell = styled.div`display: flex; flex-direction: column; align-items: center; font-size: 9px; color: #a9b2ba; letter-spacing: -.1px; line-height: 12px;`;
const PhaseBtn = styled.div`width: 24px; height: 21px; margin-top: 8px; border-radius: 3px; background: #5a5d66; border: 2px solid #3e4249; display: flex; align-items: center; justify-content: center; color: #0d0e10;`;

const Knob = ({ a, tone = "#5c5c5c", rim = "#8e9092" }: { a: number; tone?: string; rim?: string }) => (
  <svg width="30" height="28" viewBox="-15 -14 30 28">
    {[-135, -90, -45, 0, 45, 90, 135].map((d) => (
      <rect key={d} x="-.6" y="-14.500" width="1.200" height="1.200" fill="#6d757c" transform={`rotate(${d})`} />
    ))}
    <circle r="12" cx="1" cy="1.500" fill="#15191c" opacity=".7" />
    <circle r="11.500" fill={tone} stroke={rim} strokeWidth="1.500" />
    <circle r="10.200" fill="none" stroke="#1d1f21" strokeWidth=".9" opacity=".7" />
    <path d="M0-2V-9" stroke="#d5d8da" strokeWidth="1.200" transform={`rotate(${a})`} />
  </svg>
);
const DestItem = styled.div`height: 37px; border: 1px solid #3f797c; background: #365e63; display: flex; flex-direction: column; justify-content: space-between; color: #c9d2d4; flex:none;`;
const DestTop = styled.div`display: flex; align-items: center; height: 16px; padding: 1px 2px 0 1px; gap: 5px; & > svg:last-child { margin-left: auto; }`;
const PowerBox = styled.div`width: 14px; height: 14px; background: #d0d4d6; color: #365e63; display: flex; align-items: center; justify-content: center;`;
const DestLine = styled.div`display: flex; height: 16px; align-items: center; font-size: 13px; letter-spacing: -.05px; & > b { font-weight: 400; width: 136px; height: 16px; line-height: 16px; background: linear-gradient(#31a8a8,#279292); border: 1px solid #3fbcbc; padding-left: 4px; margin-right: 5px; }`;
const DestSlot = styled.div`height: 37px; flex: none; border: 1px solid #4a545c; border-radius: 2px; background: #3b434a; margin-top: 1px;`;
const DestHead = styled(TabInner)`height: 23px;`;
const StripPanel = styled(Panel)`padding: 5px 6px 5px 5px; flex: none; height: 420px;`;

/* ---------- VSTi rack ---------- */
const RackTools = styled.div`display: flex; height: 18px; margin: 9px 7px 0; flex: none;`;
const RackBtn = styled.div<{ $w: number; $ml?: number; $on?: boolean }>`
  width: ${(p) => p.$w}px; margin-left: ${(p) => p.$ml ?? 0}px; flex: none; display: flex; align-items: center; justify-content: space-around; border-radius: 2px;
  ${(p) => (p.$on ? "background:#fff;color:#1c1e20;" : "background:#3c4046;border:1px solid #64686d;color:#eff1f2;")}
`;
const Rack = styled.div`height: 154px; margin: 9px 7px 0; flex: none; display: flex; border: 2px solid #a8aaab; border-radius: 4px; background: linear-gradient(#747575,#656667);`;
const RackNum = styled.div`width: 20px; border-right: 1px solid #3d3f41; padding: 9px 0 0 4px; color: #c5c8ca; font-size: 11px;`;
const RackMain = styled.div`width: 170px; padding: 4px 6px 0 4px; display: flex; flex-direction: column;`;
const RackSide = styled.div`flex: 1; border-left: 1px solid #3d3f41; display: flex; flex-direction: column; justify-content: space-between; align-items: center; padding: 4px 0; color: #e9ebec;`;
const Lcd = styled.div`height: 91px; background: linear-gradient(160deg,#4b4d4e,#3c3e3f 40%,#37393a); border: 2px solid #1d1f20; border-radius: 7px; color: #cfd2d4; padding: 12px 6px 0 5px; display: flex; flex-direction: column; box-shadow: 0 1px 0 #9a9c9d;`;
const LcdTop = styled.div`display: flex; gap: 1px; color: #85898c; height: 23px; flex: none; padding-left: 1px; padding-top: 2px;`;
const LcdPower = styled.div`width: 13px; height: 14px; background: #dcdedf; color: #3b3d3e; display: flex; align-items: center; justify-content: center;`;
const LcdNames = styled.div`margin-left: auto; text-align: right; color: #cfd2d4; font-weight: 700; font-size: 10.500px; line-height: 11.500px; margin-top: -3px; letter-spacing: -.45px;`;
const LcdMid = styled.div`display: flex; align-items: center; height: 14px; font-weight: 600; color: #d0d3d5; padding-left: 6px; & small { color: #85898c; font-size: 9px; width: 15px; font-weight: 800; }`;
const LcdGrid = styled.div`display: grid; grid-template-columns: repeat(4,37px); row-gap: 4px; margin-top: 7px; justify-items: center; font-size: 8.500px; line-height: 12px; color: #b4b7b9; margin-left: -3px; letter-spacing: -.25px; & span { max-width: 35px; overflow: hidden; display: flex; justify-content: center; }`;
const RackKnobs = styled.div`display: flex; justify-content: space-between; padding: 12px 7px 0 6px; `;
const RackFoot = styled.div`height: 22px; margin: 1px 7px 0; background: #42464b; border-bottom: 1px solid #8b8f93; display: flex; align-items: center; justify-content: space-between; padding: 0 29px 0 33px; color: #9aa0a4; font-weight: 600; font-size: 12px; flex:none; & span { display: flex; align-items: center; gap: 4px; }`;
const RackKnob = ({ a, arc }: { a: number; arc?: boolean }) => (
  <svg width="34" height="34" viewBox="-17 -17 34 34">
    <circle r="15" fill="#191a1b" stroke="#434445" />
    {arc && <path d="M-12 11A16 16 0 0 1-13-9" fill="none" stroke="#2b9cb8" strokeWidth="1.800" />}
    <circle r="10" fill="#3b3c3d" stroke="#0d0d0d" strokeWidth="1.500" />
    <path d="M0-2V-8" stroke="#d5d8da" strokeWidth="1.600" transform={`rotate(${a})`} />
  </svg>
);

/* ---------- bottom tabs, transport, taskbar ---------- */
const Transport = styled.div`height: 40px; background: #24272a; display: flex; align-items: center; padding: 0 0 1px 7px; flex: none;`;
const Dots = styled.div<{ $ml: number; $mr: number }>`width: 2px; height: 10px; margin: 2px ${(p) => p.$mr}px 0 ${(p) => p.$ml}px; background: repeating-linear-gradient(#b4b7ba 0 2px,transparent 2px 4px); flex: none;`;
const TimeBox = styled.div<{ $w: number; $ml?: number }>`width: ${(p) => p.$w}px; height: 31px; margin-left: ${(p) => p.$ml ?? 0}px; background: #000; border-radius: 3px; display: flex; align-items: center; flex: none; color: #d9dcde;`;
const LocBtn = styled.div<{ $w: number; $ml?: number }>`width: ${(p) => p.$w}px; margin-left: ${(p) => p.$ml ?? 0}px; height: 31px; border: 1px solid #8b8e91; border-radius: 5px; background: #101213; padding: 3px; display: flex; gap: 4px; flex: none;`;
const LocKey = styled.div<{ $lit?: boolean }>`flex: 1; background: ${(p) => (p.$lit ? "#d9dde1" : "linear-gradient(#5d6064,#6f7276)")}; border-radius: 2px; display: flex; align-items: center; justify-content: center; color: #16181a;`;
const TKeys = styled.div`width: 273px; margin-left: 6px; height: 31px; border: 1px solid #8b8e91; border-radius: 5px; background: #101213; padding: 3px; display: flex; gap: 1px; flex: none;`;
const TKey = styled.div<{ $w: number; $t?: "loop" | "stop" }>`
  width: ${(p) => p.$w}px; flex: none; display: flex; align-items: center; justify-content: center; color: #1e2124;
  background: ${(p) => (p.$t === "loop" ? "linear-gradient(#806cf5,#6b57dd)" : p.$t === "stop" ? "linear-gradient(#edf3fa,#d3dae2)" : "linear-gradient(#b3bac2,#969da5)")};
`;
const VSep = styled.div<{ $ml: number; $h?: number }>`width: 1px; height: ${(p) => p.$h ?? 25}px; margin-left: ${(p) => p.$ml}px; background: #3d4246; flex: none;`;
const Taskbar = styled.div`height: 40px; background: linear-gradient(90deg,#080b13,#04101b 55%,#030a14); display: flex; flex: none;`;
const TaskCell = styled.div<{ $w: number; $run?: boolean; $on?: boolean; $ml?: number }>`
  width: ${(p) => p.$w}px; margin-left: ${(p) => p.$ml ?? 0}px; flex: none; display: flex; align-items: center; justify-content: center; color: #fff;
  ${(p) => p.$on && "background:#30343b;"} border-bottom: 2px solid ${(p) => (p.$run || p.$on ? "#76b9ed" : "transparent")}; padding-top: 2px;
`;
const Tray = styled.div`margin-left: auto; display: flex; align-items: center; color: #fff; padding-right: 4px;`;
const TrayCell = styled.div<{ $w: number }>`width: ${(p) => p.$w}px; display: flex; flex-direction: column; align-items: center; justify-content: center; font-size: 12px; line-height: 18px; letter-spacing: -.4px;`;

const InfoPairs: [string, number, string, number][] = [
  ["Max. Aufnahmezeit", 110, "65 Std 51 Min", 82],
  ["Aufnahmeformat", 100, "48 kHz - 32 bit", 85],
  ["Projekt-Framerate", 99, "30 fps", 41],
  ["Projekt-Pan-Modus", 110, "Konst. Leistung", 89],
];
const Menus: [string, number][] = [["Datei", 41], ["Bearbeiten", 70], ["Projekt", 51], ["Audio", 46], ["MIDI", 39], ["Medien", 54], ["Transport", 65], ["Studio", 48], ["Fenster", 52], ["Hub", 37], ["Hilfe", 40]];
const tools = ["range", "split", "glue", "erase", "zoom", "cross", "pencil", "line", "speaker", "bucket"];
const bars = Array.from({ length: 14 }, (_, i) => 1 + i * 8);

const noteRuns: [number, number, number, number][] = [
  [6, 32, 8, -1], [12, 24, 6, -1], [35, 28, 5, -1], [38, 20, 3, 0], [56, 24, 24, 0], [60, 20, 18, 0], [82, 28, 8, -1], [86, 24, 6, 0], [104, 18, 5, 0], [110, 26, 8, -1],
  [118, 22, 20, 0], [122, 14, 18, 0], [140, 20, 6, -1], [146, 15, 5, -1], [152, 32, 3, 0], [156, 26, 3, -1], [160, 15, 12, 0], [172, 28, 6, -1], [178, 25, 20, 0], [184, 17, 18, 0], [200, 21, 8, 0],
  [206, 26, 6, -1], [210, 12, 10, 0], [214, 28, 5, 0], [220, 15, 6, 0], [222, 25, 6, 0], [231, 7, 12, -1], [240, 4, 14, 0], [256, 7, 10, 0], [258, 25, 6, 0], [262, 22, 8, 0],
];
const verticals = [15, 34, 40, 48, 80, 82, 84, 94, 108, 110, 138, 140, 152, 168, 170, 197, 199, 212, 215, 226, 231, 249, 259, 268];

const inserts = ["TDR Nova", "NYCompressor", "Ozone 8", "RVerb Mono/Stereo", "RoomWorks SE", "DragonflyReverb-vst"];
const eq: [string, string, string, number][] = [["1", "LO", "loShelf", -60], ["2", "LMF", "bell", -5], ["3", "HMF", "bell", 20], ["4", "HI", "hiShelf", 100]];

const Inspector = () => (
  <Zone $w={173}>
    <TabRow><Tab $w={98} $on>Inspector</Tab></TabRow>
    <Panel $r="0 8px 8px 0">
      <InspBar $mt={8}>
        <InspCell $w={24}><Txt $ml={11} $s={11}>1</Txt></InspCell>
        <InspCell $blue><Txt $s={12} $b={600} $ml={-2} $ls={-0.5}>Ф-НО С ОБР...ОЙ</Txt><Icon n="triR" w={7} h={9} /></InspCell>
        <InspCell $w={23} $end><Icon n="edit" s={18} c="#3a3d40" /></InspCell>
      </InspBar>
      <InspSection>
        <InspDeck>
          <Pill><PillCell>m</PillCell><PillCell $t="red">S</PillCell></Pill>
          <Pill><PillCell $w={22}>R</PillCell><PillCell $w={24}>W</PillCell></Pill>
          <RoundRow><Round $s={24} $red><Icon n="dot" s={17} /></Round><Round $s={17}><Icon n="spk" s={11} /></Round></RoundRow>
          <Pill><Push /><PillCell $w={22}><Icon n="freeze" s={13} /></PillCell></Pill>
        </InspDeck>
        <ValueDeck>
          <ValueIcons><Icon n="vol" w={15} h={11} /><Icon n="pan" w={15} h={11} /><Icon n="delay" w={22} h={14} /></ValueIcons>
          <ValueBox>
            <ValueLine>-0.15<Handle $x={74} $fill /></ValueLine>
            <ValueLine $mid>C<Handle $x={48} /></ValueLine>
            <ValueLine>0.00<Handle $x={48} /></ValueLine>
          </ValueBox>
        </ValueDeck>
        <ListBox $mt={10}>
          <ListRow $dim $h={17}><Icon n="diamond" s={11} />MY PIANO ACCUSTIK<Icon n="reload" s={12} /></ListRow>
          <ListRow><Icon n="into" s={12} c="#5a5d61" />All MIDI Inputs</ListRow>
          <ListRow><Icon n="outof" s={12} c="#5a5d61" />Kontakt<Icon n="outof" s={12} /></ListRow>
        </ListBox>
        <ChanRow><Icon n="grid9" s={9} /><Txt $ml={22} $b={700} $s={10.5} $c="#d9dcde">1</Txt><Push /><Icon n="diamond" s={11} /><RouteKeys><Icon n="arrR" s={9} /><Icon n="keys" s={12} /></RouteKeys></ChanRow>
        <ListBox $mt={4}>
          <ListRow $dim $h={17}><Icon n="sheet" s={12} c="#5a5d61" /></ListRow>
          <ListRow $dim><Icon n="drum" s={12} /><Txt $b={700} $s={10.5} $ls={-0.1} $c="#5f6266">Keine Drum-Map</Txt></ListRow>
        </ListBox>
      </InspSection>
      <InspBar $mt={12}><InspCell><Txt $s={12} $ls={-0.1}>Akkorde</Txt></InspCell><InspCell $w={23} $end><Icon n="chords" s={13} /></InspCell></InspBar>
      <InspBar $mt={10}>
        <InspCell $w={24} />
        <InspCell $blue><Txt $s={12} $b={600} $ml={1} $ls={-0.3}>PIANO A...OK</Txt><Icon n="keys" s={12} c="#e8edf2" /><Icon n="triR" w={7} h={9} /></InspCell>
        <InspCell $w={23} $end><Icon n="edit" s={18} c="#3a3d40" /></InspCell>
      </InspBar>
      <InspBar $mt={8}><InspCell><Txt $s={12}>MIDI-Parameter</Txt></InspCell><InspCell $w={23} $end><Icon n="params" s={15} /></InspCell></InspBar>
      <SettingsRow><Txt $s={12}>Einstellungen</Txt><Rule $ml={-30} $w={87} /><Txt $ml={3}><Icon n="gear" s={13} c="#d0d3d5" /></Txt></SettingsRow>
    </Panel>
    <TabRow $h={20}><Tab $w={65} $on $bottom>Spur</Tab><Tab $w={72} $pt={5}>Editor</Tab></TabRow>
  </Zone>
);

const Arrange = () => (
  <ArrangePanel>
    <ArrRow>
      <TrackList>
        <ListHead><Icon n="plus" s={8} /></ListHead>
        <TrackRow $h={20}>
          <Stripe $w={39}><Icon n="folder" w={19} h={15} /></Stripe>
          <Txt $ml={17} $s={11.5} $b={600} $ls={-0.35} $c="#b9bdc0" style={{ lineHeight: "22px" }}>Eingangs-/Ausgangskanäle</Txt>
          <Push /><MeterStub />
        </TrackRow>
        <TrackRow $h={42}>
          <Stripe $w={11} $c="#202327" /><Stripe $w={28} />
          <TrackMain $pl={8}>
            <TrackLine>
              <Pill $dark $w={44}><PillCell>m</PillCell><PillCell $t="red">S</PillCell></Pill>
              <Txt $s={14} $b={600} $ml={2} $ls={-0.6}>Stereo Out</Txt>
              <Push /><Pill $dark $w={48}><PillCell><Txt $s={10} $b={700}>0.00</Txt></PillCell></Pill><Txt $ml={21} />
            </TrackLine>
            <TrackLine $ml={50}>
              <Pill $dark $w={47}><PillCell>R</PillCell><PillCell>W</PillCell></Pill>
              <Pill $dark $w={46}><PillCell><Icon n="edit" s={12} /></PillCell><PillCell><Icon n="stereo" s={14} /></PillCell></Pill>
              <Pill $dark $w={122}><Txt $s={10} $b={600} $ml={3} style={{ lineHeight: "15px" }}>Lautstärke</Txt></Pill>
            </TrackLine>
          </TrackMain>
          <MeterStub />
        </TrackRow>
        <TrackRow $h={42} $sel>
          <Stripe $w={28}><Icon n="keysSolid" w={12} h={15} /><Txt $s={10} $c="#3a444f" style={{ lineHeight: "16px" }}>1</Txt></Stripe>
          <TrackMain $pl={8}>
            <TrackLine>
              <Pill $w={45}><PillCell>m</PillCell><PillCell $t="red">S</PillCell></Pill>
              <Txt $s={13.5} $b={600} $ml={2} $ls={-0.38} $c="#0f1113">Ф-НО С ОБРАБОТКОЙ</Txt>
            </TrackLine>
            <TrackLine $ml={50} $gap={3}>
              <Pill $w={48}><PillCell $t="red"><Icon n="dot" s={12} /></PillCell><PillCell><Icon n="spk" s={12} /></PillCell></Pill>
              <Pill $w={47}><PillCell $t="teal"><Icon n="edit" s={12} /></PillCell><PillCell><Icon n="keysSolid" s={11} /></PillCell></Pill>
              <Pill $w={47}><PillCell>R</PillCell><PillCell>W</PillCell></Pill>
            </TrackLine>
          </TrackMain>
          <MeterStub />
        </TrackRow>
      </TrackList>
      <Timeline>
        <Ruler>{bars.map((b, i) => <Bar key={b}>{i < 13 ? b : ""}</Bar>).slice(0, 13)}</Ruler>
        <LaneArea>
          <GridCols>{bars.map((b) => <GridCol key={b} />)}</GridCols>
          <Lane $h={20} />
          <Lane $h={12} $c="#b4b7b9" />
          <Lane $h={30} />
          <Lane $h={42}>
            <Clip>
              <ClipNotes width="283" height="37">
                {verticals.map((x) => <rect key={x} x={x} y={x % 3 ? 4 : 12} width="1" height={x % 3 ? 30 : 22} fill="#6d8196" opacity=".7" />)}
                {noteRuns.map(([x, y, n, s], i) => Array.from({ length: Math.ceil(n / 2) }, (_, k) => (
                  <rect key={`${i}-${k}`} x={x + k * 2} y={y + (s ? -k : (k * 7 + i) % 3)} width="3" height="1.500" fill="#5a6a7a" opacity=".8" />
                )))}
              </ClipNotes>
              PIANO ACCUSTIK OK
            </Clip>
          </Lane>
        </LaneArea>
        <LoopMark $x={6} /><LoopMark $x={283} $flip />
        <Playhead />
      </Timeline>
      <VScroll>
        <DropBox><Icon n="tri" s={9} /></DropBox>
        <Txt style={{ marginTop: 9 }}><Icon n="line" s={9} /></Txt>
        <VLine $h={45} $mt={7} /><Knot /><VLine $h={200} $mt={22} />
        <Txt style={{ marginTop: 3 }}><Icon n="tri" s={9} /></Txt><Txt style={{ marginTop: 3 }}><Icon n="minus" s={7} /></Txt>
        <VLine $h={6} $mt={3} /><Knot /><VLine $h={45} /><Txt style={{ marginTop: 3 }}><Icon n="plus" s={5} /></Txt>
      </VScroll>
    </ArrRow>
    <HScroll>
      <Txt>-</Txt><Rule $ml={352} $w={989} $c="#a7aaad" /><Txt $ml={20}><Icon n="tri" s={10} /></Txt><Txt $ml={9}><Icon n="minus" s={6} /></Txt>
      <Rule $ml={6} $w={6} $c="#a7aaad" /><Knot /><Rule $w={34} $c="#a7aaad" /><Txt $ml={7}><Icon n="plus" s={5} /></Txt>
    </HScroll>
  </ArrangePanel>
);

const Mixer = () => (
  <MixPanel>
    <MixBody>
      <MixRail>
        <RailDots><i /><i /><i /></RailDots>
        <RailBtn $on><Icon n="mixer" w={13} h={16} /></RailBtn>
        <RailBtn><Icon n="inserts" w={16} h={16} /></RailBtn>
        <RailBtn><Icon n="console" w={16} h={17} /></RailBtn>
      </MixRail>
      <RailNotch><svg width="9" height="14" style={{ marginLeft: 5 }}><path d="M1 1L7 7 1 13" fill="#34383f" stroke="#64676c" strokeWidth="2" /></svg></RailNotch>
      <Strips>
        <Channel ml={9} name="Stereo In" num="1" peak="-oo" input />
        <Channel ml={1} name="Mono In" num="2" peak="-22.8" input mono />
        <Channel ml={1} name="Mono In 2" num="3" peak="-oo" input mono />
        <Channel ml={15} name="Ф-НО С ОБРАБ" num="1" peak="-25.1" vol="-0.15" armed solo edit />
        <Channel ml={972} name="Stereo Out" num="1" peak="-22.8" solo />
      </Strips>
    </MixBody>
    <Txt style={{ marginBottom: 16, lineHeight: 0 }}><Rule $ml={52} $w={1427} $c="#a3a6a9" /></Txt>
  </MixPanel>
);

const ChannelSettings = () => (
  <Dialog>
    <DlgTitle><CubaseLogo s={14} /><Txt $s={12} $ls={-0.25}>Kanaleinstellungen : Ф-НО С ОБРАБОТКОЙ [stereo]</Txt><Push /><Icon n="thinX" s={11} /></DlgTitle>
    <DlgBar>
      <Group $w={24}><Btn><Icon n="layout" s={16} c="#0a0a0a" /></Btn></Group>
      <Group $w={382} $ml={6}>
        <Btn $w={99}><Txt $b={700} $s={11} $ml={6}>All MIDI I...ts</Txt>&nbsp;<Icon n="arrL" s={12} /></Btn>
        <Btn $w={31} $sep><Txt $b={600} $s={11}>1</Txt><Txt $ml={7}><Icon n="triUp" w={6} h={4} c="#66696c" /><br /><Icon n="triDn" w={6} h={4} c="#66696c" /></Txt></Btn>
        <Btn $w={152} $t="blue" $sep><Icon n="keys" s={12} c="#3a4450" /><Txt $b={700} $s={13} $ml={4} $c="#46515c">Ф-НОС...БОТКОЙ</Txt><Txt $ml={14}><Icon n="triR" w={6} h={9} c="#46515c" /></Txt></Btn>
        <Btn $w={100} $sep><Icon n="arrR" s={12} /><Txt $b={700} $s={11} $ml={4}>Stereo Out</Txt><Txt $ml={18} /></Btn>
      </Group>
      <Group $w={44} $ml={6}><Btn $c="#54575a"><Icon n="arrL" s={12} /></Btn><Btn $c="#54575a"><Icon n="arrR" s={12} /></Btn></Group>
      <Group $w={38} $ml={6}><Btn><Icon n="goto" w={20} h={14} /></Btn></Group>
      <Group $w={153} $ml={76}><Btn $c="#2c2f32"><Icon n="diamond" s={11} /><Txt $b={700} $s={11} $ml={6}>MY PIANO ACCUSTIK</Txt><Txt $ml={7}><Icon n="reload" s={12} /></Txt></Btn></Group>
      <Group $w={24} $ml={7}><Btn><Icon n="tri" w={12} h={12} /></Btn></Group>
    </DlgBar>
    <DlgBody>
      <DlgCol $w={196}>
        <TabRow><Tab $w={99} $on $pt={1}><TabInner $w={90} $pl={6}><Icon n="half" s={12} c="#62666b" /><Txt $b={700} $s={11.5} $ls={-0.5} $ml={-8}>Insert-Effekte</Txt><Txt $ml={-3}><Icon n="diamond" s={10} c="#85898d" /></Txt></TabInner></Tab>
          <Tab $w={94}><TabInner $w={90}><Icon n="half" s={13} c="#4d5156" /><Txt $b={700} $s={11.5} $ml={-14}>Strip</Txt><i /></TabInner></Tab></TabRow>
        <Panel $r="0 8px 8px 8px">
          <Slots>
            {inserts.map((n) => <Insert $on key={n}><Icon n="bypass" s={12} /><Icon n="edit" s={12} /><Txt $ml={5} $ls={-0.15}>{n}</Txt><Icon n="tri" w={12} h={13} /></Insert>)}
            <Insert /><Insert />
          </Slots>
        </Panel>
      </DlgCol>
      <DlgCol $w={521}>
        <TabRow><Tab $w={263} $on $pt={1}><TabInner $w={256} $pl={6}><Icon n="ring" s={12} c="#6c7075" /><Txt $b={700} $s={11.5}>Channel Strip</Txt><Icon n="diamond" s={11} c="#c8cbcd" /></TabInner></Tab>
          <Tab $w={254}><TabInner $w={254} $pl={5}><Icon n="ring" s={12} c="#6c7075" /><Txt $b={700} $s={11.5}>Equalizer</Txt><Icon n="diamond" s={11} c="#c8cbcd" /></TabInner></Tab></TabRow>
        <Panel $r="0 8px 8px 8px">
          <StripArea>{["Gate", "Comp", "Tools", "Sat", "Limit"].map((m) => <StripCol key={m}><Module>{m}</Module></StripCol>)}</StripArea>
          <EqArea>
            <EqCol>
              <EqHead $pre><Icon n="dot" s={17} c="#c9d6e2" /><span>PRE</span></EqHead>
              <KnobRow><KnobCell><Knob a={-135} tone="#66726c" rim="#d5d8d6" />LC</KnobCell><KnobCell><Knob a={135} tone="#66726c" rim="#d5d8d6" />HC</KnobCell></KnobRow>
              <KnobRow><KnobCell><Knob a={0} tone="#b33a40" rim="#d9d9d9" />Pre Gain</KnobCell><KnobCell><PhaseBtn><Icon n="phase" s={13} /></PhaseBtn></KnobCell></KnobRow>
            </EqCol>
            {eq.map(([n, l, ic, a]) => (
              <EqCol key={n}>
                <EqHead><big>{n}</big><span>{l}</span><Icon n={ic} w={15} h={12} /></EqHead>
                <KnobRow><KnobCell><Knob a={0} />Gain {n}</KnobCell></KnobRow>
                <KnobRow><KnobCell><Knob a={a} />Freq {n}</KnobCell><KnobCell><Knob a={-110} />Q {n}</KnobCell></KnobRow>
              </EqCol>
            ))}
          </EqArea>
        </Panel>
      </DlgCol>
      <DlgCol $w={196} $ml={1}>
        <Panel>
          <DestHead $w={188} $pl={8}><i /><Txt $b={700} $s={11.5} $ml={12}>Destinations</Txt><Icon n="dot" s={13} c="#6c7075" /></DestHead>
          <Slots style={{ paddingTop: 6 }}>
            <DestItem><DestTop><PowerBox><Icon n="power" s={11} /></PowerBox><Icon n="half" s={14} /><Icon n="tri" s={12} /></DestTop><DestLine><b>Links - Stereo Out</b>0.00</DestLine></DestItem>
            {[1, 2, 3, 4, 5, 6, 7].map((i) => <DestSlot key={i} />)}
          </Slots>
        </Panel>
      </DlgCol>
      <DlgCol $w={117}>
        <StripPanel><Channel big name="Ф-НО С ОБРАБО" num="1" vol="-0.15" peak="-25.1" armed solo edit /></StripPanel>
      </DlgCol>
    </DlgBody>
  </Dialog>
);

const VstRack = () => (
  <Zone $w={231}>
    <TabRow><Tab $w={71} $on>VSTi</Tab><Tab $w={86}>Medien</Tab></TabRow>
    <Panel $r="0 8px 8px 8px">
      <RackTools>
        <RackBtn $w={25}><Icon n="addkeys" w={19} h={12} /></RackBtn><RackBtn $w={25} $ml={4}><Icon n="search" s={14} /></RackBtn>
        <RackBtn $w={50} $ml={63}><Icon n="up" s={13} /><Icon n="down" s={13} /></RackBtn>
        <RackBtn $w={25} $ml={3} $on><Icon n="eject" s={13} /></RackBtn><RackBtn $w={15} $ml={3}><Icon n="gear" s={12} /></RackBtn>
      </RackTools>
      <Rack>
        <RackNum>1</RackNum>
        <RackMain>
          <Lcd>
            <LcdTop><LcdPower><Icon n="power" s={11} /></LcdPower><Icon n="edit" s={13} /><Icon n="freeze" s={12} /><LcdNames>Ф-Н...ТКОЙ<br />Kontakt</LcdNames><Txt $ml={9}><Icon n="tri" s={12} /></Txt></LcdTop>
            <LcdMid><small>R</small><small>W</small><Txt $ml={26} $b={600} $s={11}>Page 1</Txt></LcdMid>
            <LcdGrid><span>Convolution</span><span>Convolution</span><span>Digital</span><span>Digital</span><span>Rever</span><span>Rever</span><span>Ambience</span><span>Ambience</span></LcdGrid>
          </Lcd>
          <RackKnobs><RackKnob a={-140} /><RackKnob a={-50} arc /><RackKnob a={-140} /><RackKnob a={-55} arc /></RackKnobs>
        </RackMain>
        <RackSide><Icon n="ejectL" s={11} /><Icon n="dial" s={12} /></RackSide>
      </Rack>
      <RackFoot><span><Icon n="triUp" w={12} h={10} />Track</span><span>Rack&nbsp;<Icon n="triDn" w={12} h={10} /></span></RackFoot>
    </Panel>
  </Zone>
);

const TransportBar = () => (
  <Transport>
    <Group $w={22} $h={23}><Btn><Icon n="constrain" s={17} /></Btn></Group>
    <Group $w={32} $h={23} $ml={8}><Btn><Icon n="dot" s={17} c="#eef1f5" /></Btn><Btn $w={10} $sep><Icon n="corner" s={7} c="#111" /></Btn></Group>
    <Dots $ml={5} $mr={4} />
    <Group $w={32} $h={23}><Btn><Icon n="burst" w={13} h={16} c="#eef1f5" /></Btn><Btn $w={10} $sep><Icon n="corner" s={7} c="#111" /></Btn></Group>
    <Dots $ml={5} $mr={4} />
    <Group $w={55} $h={23}><Btn $w={22}><Icon n="bars" s={13} c="#eef1f5" /></Btn><Btn $w={23} $sep><Txt $s={13} $ls={-0.8}>AQ</Txt></Btn><Btn $w={10} $sep><Icon n="corner" s={7} c="#111" /></Btn></Group>
    <Dots $ml={7} $mr={0} />
    <LocBtn $w={23} $ml={269}><LocKey><Icon n="locL" w={9} h={12} /></LocKey></LocBtn>
    <TimeBox $w={107}><Txt $ml={28} $s={13.5} $b={700} $ls={-0.25}>0:00:00.000</Txt></TimeBox>
    <LocBtn $w={23} $ml={5}><LocKey><Icon n="locR" w={9} h={12} /></LocKey></LocBtn>
    <TimeBox $w={106}><Txt $ml={28} $s={13.5} $b={700} $ls={-0.25}>0:00:54.000</Txt></TimeBox>
    <LocBtn $w={45} $ml={6}><LocKey><Icon n="punchI" s={12} /></LocKey><LocKey><Icon n="punchO" s={12} /></LocKey></LocBtn>
    <TKeys>
      <TKey $w={18}><Icon n="rtz" s={12} /></TKey><TKey $w={18}><Icon n="rte" s={12} /></TKey>
      <TKey $w={37}><Icon n="rew" w={16} h={11} /></TKey><TKey $w={37}><Icon n="ffw" w={16} h={11} /></TKey>
      <TKey $w={37} $t="loop"><Icon n="loop" w={17} h={16} /></TKey><TKey $w={37} $t="stop"><Icon n="stop" s={12} /></TKey>
      <TKey $w={37}><Icon n="play" s={10} /></TKey><TKey $w={37}><Icon n="dot" s={12} /></TKey>
    </TKeys>
    <Dots $ml={4} $mr={4} />
    <TimeBox $w={277}>
      <Txt $ml={6}><Icon n="clock" s={13} c="#6d7176" /></Txt><Txt $ml={44} $s={16} $b={700} $ls={-0.3}>0:00:10.846</Txt><VSep $ml={6} />
      <Txt $ml={4}><Icon n="clock" s={11} c="#6d7176" /></Txt><Txt $ml={23} $s={13.5} $b={700} $ls={-0.2}>0:00:10.846</Txt>
    </TimeBox>
    <Dots $ml={2} $mr={4} />
    <LocBtn $w={21}><LocKey $lit><Icon n="note" s={12} /></LocKey></LocBtn>
    <TimeBox $w={132}><Txt $ml={10} $s={13} $b={700} $ls={-0.2}>120.000</Txt><VSep $ml={8} /><Txt $ml={33} $s={13} $b={700}>4/4</Txt></TimeBox>
    <Dots $ml={3} $mr={0} />
    <Group $w={33} $h={24} $ml={268}><Btn><Icon n="metro" s={14} c="#0d0e10" /></Btn><Btn $w={10} $sep><Icon n="corner" s={7} c="#111" /></Btn></Group>
    <Dots $ml={4} $mr={5} />
    <TimeBox $w={75}><VSep $ml={21} /></TimeBox>
    <Dots $ml={4} $mr={7} />
    <Icon n="gear" s={13} c="#c9ccce" />
  </Transport>
);

const TaskIcons: { w: number; ml?: number; run?: boolean; on?: boolean; g: React.ReactNode }[] = [
  { w: 48, g: <path d="M4 6l7-1v7H4zM12 4.800L21 3.500V12h-9zM4 13h7v7l-7-1zM12 13h9v8.500L12 20.200z" fill="#fff" /> },
  { w: 48, g: <path d="M5 4.500h10M5 8h10v8H5zM5 19.500h10M19 4v3M19 10v11" stroke="#fff" strokeWidth="1.500" fill="none" /> },
  { w: 40, ml: 7, run: true, g: <g><circle cx="12" cy="12" r="11" fill="#db4437" /><path d="M12 12L2.500 6.500A11 11 0 0 0 10 22.800z" fill="#0f9d58" /><path d="M12 12l-2 10.800A11 11 0 0 0 22 7H12z" fill="#ffcd40" /><circle cx="12" cy="12" r="5.200" fill="#fff" /><circle cx="12" cy="12" r="4" fill="#4285f4" /></g> },
  { w: 40, ml: 9, run: true, g: <g><path d="M1 3h8l2 2h12v17H1z" fill="#f8d775" /><path d="M1 8h22v14H1z" fill="#fbe08d" /><path d="M5 22v-8h14v8h-4v-4H9v4z" fill="#35a7e0" /></g> },
  { w: 50, ml: 4, g: <g><circle cx="12" cy="12" r="11" fill="#a9bff0" stroke="#e5ecff" /><rect x="6.500" y="11" width="11" height="7" fill="#111a33" /><path d="M8.500 11V8a3.500 3.500 0 0 1 7 0v3" fill="none" stroke="#111a33" strokeWidth="2" /></g> },
  { w: 40, ml: 4, run: true, g: <g><path d="M0 9l12-8 12 8v14H0z" fill="#fff" /><path d="M1 8.500h22l-9 5.500 2 5-4-4z" fill="#0a0d14" /></g> },
  { w: 48, ml: 5, on: true, g: <g><rect x="0" y="0" width="24" height="24" rx="3" fill="#eeebea" /><path d="M4 12l8-9h4l-2 5-4 4 4 4 2 5h-4z" fill="#b3162f" /><circle cx="16.500" cy="12" r="2.800" fill="#b3162f" /></g> },
  { w: 50, g: <g><path d="M7 2l14 2v11L9 14z" fill="#4db7f5" /><path d="M0 16l9-1 9 3-4 4-5 0z" fill="#cfd6db" /><path d="M11 14h7v3h-7z" fill="#9aa3a9" /></g> },
  { w: 48, g: <g><ellipse cx="13" cy="11" rx="7" ry="12" fill="#16191c" stroke="#e6e6e6" strokeWidth="1.600" transform="rotate(-35 13 11)" /><ellipse cx="11" cy="12" rx="2.500" ry="4" fill="#bbb" transform="rotate(-35 11 12)" /><path d="M1 10l5 2-1 6-4-2z" fill="#8a8d90" /></g> },
  { w: 49, g: <g><path d="M3 2l6-1 4 12-6 3z" fill="#cfe1ff" /><path d="M4 15l12-3 4 5-8 6-7-3z" fill="#7ea2ea" /><ellipse cx="13" cy="17" rx="4" ry="2.500" fill="#d9cf7a" /></g> },
  { w: 49, g: <g><path d="M1 2h5v19H1z" fill="#7a3e1d" /><path d="M7 1h4v20H7z" fill="#b07a4a" /><path d="M12 4h4v17h-4z" fill="#2d4d63" /><path d="M16 6l4-1 3 16h-4z" fill="#4076cc" /></g> },
  { w: 49, g: <g><rect width="24" height="24" rx="3" fill="#fff" /><path d="M8 5l4 2.500L8 10 4 7.500zM16 5l4 2.500L16 10l-4-2.500zM8 10l4 2.500L8 15l-4-2.500zM16 10l4 2.500-4 2.500-4-2.500zM12 14l4 2.500-4 2.500-4-2.500z" fill="#0a62f6" /></g> },
  { w: 49, g: <g><path d="M2 2h20v21H2z" fill="#2f6390" /><path d="M3 6c4-4 7 1 10-2s5-3 8-2M4 10c4-3 6 1 9-1M6 14h9M6 17h7M6 20h9" stroke="#d5e4f0" strokeWidth="1.600" fill="none" /></g> },
];

export default function App() {
  return (
    <Screen>
      <Global />
      <MenuBar>
        <Txt><CubaseLogo s={18} /></Txt><Txt $ml={13} />
        {Menus.map(([m, w]) => <MenuItem $w={w} key={m}>{m}</MenuItem>)}
        <Txt $s={12} $ls={-0.64} $ml={516}>Cubase Elements-Projekt - PLUGIN TEST-08</Txt>
        <Push />
        <WinCtl><Icon n="minus" w={12} h={11} /></WinCtl><WinCtl $ml={33}><Icon n="restore" s={13} /></WinCtl><WinCtl $ml={35}><Icon n="thinX" s={11} /></WinCtl><Txt $ml={20} />
      </MenuBar>
      <ToolBar>
        <Group $w={44}><Btn><Icon n="undo" s={12} /></Btn><Btn><Icon n="redo" s={12} /></Btn></Group>
        <Group $w={89} $ml={475}><Btn $w={22} $t="yellow" $c="#4d430a">M</Btn><Btn $w={22} $t="red" $c="#561012">S</Btn><Btn>R</Btn><Btn>W</Btn></Group>
        <Group $w={33} $ml={8}><Btn $t="light"><Icon n="autoscroll" w={17} h={17} c="#111" /></Btn><Btn $w={11} $t="light" $sep><Icon n="tri" s={8} /></Btn></Group>
        <Group $w={242} $ml={9}><Btn $w={22} $t="light"><Icon n="arrow" w={14} h={16} c="#000" /></Btn>{tools.map((t) => <Btn $w={22} key={t}><Icon n={t} s={16} /></Btn>)}</Group>
        <Group $w={24} $ml={8}><Btn><Icon n="xfade" s={18} /></Btn></Group>
        <Group $w={111} $ml={6}><Btn $w={22} $t="light"><Icon n="snap" s={14} c="#000" /></Btn><Btn $w={26}><Icon n="hash" s={13} c="#000" /></Btn><Btn $w={16} $c="#85898c"><Icon n="gridrel" s={14} /></Btn><Btn $w={22} $c="#85898c"><Icon n="cycle2" s={14} /></Btn><Btn $c="#85898c"><Icon n="tee" s={13} /><Icon n="tri" s={8} c="#55585b" /></Btn></Group>
        <Group $w={118} $ml={8}><Field $w={118}><Icon n="hash" s={13} c="#e9ebed" /><Txt $ml={5} $b={600} $s={12} $ls={-0.5}>Takt</Txt><Icon n="tri" s={7} c="#55585b" /></Field></Group>
        <Group $w={151} $ml={8}><Btn $w={22}><Txt $s={16}>Q</Txt></Btn><Field $w={118} $sep><Txt $b={600} $s={12}>1/8</Txt><Icon n="applyq" s={12} /></Field><Btn $sep><Icon n="corner" s={7} c="#111" /></Btn></Group>
        <Group $w={77} $ml={475}><Btn><Icon n="winL" w={13} h={13} /></Btn><Btn><Icon n="winB" w={13} h={13} /></Btn><Btn><Icon n="winR" w={13} h={13} /></Btn><Btn $w={11} $sep><Icon n="tri" s={8} /></Btn></Group>
        <Txt $ml={11}><Icon n="gear" s={13} c="#c9ccce" /></Txt>
      </ToolBar>
      <InfoLine>
        {InfoPairs.map(([k, kw, v, vw]) => <React.Fragment key={k}><InfoKey $w={kw}>{k}</InfoKey><InfoVal $w={vw}>{v}</InfoVal></React.Fragment>)}
        <Txt $ml={565}><Icon n="gear" s={13} c="#c9ccce" /></Txt>
      </InfoLine>
      <StatusLine>Kein Objekt ausgewählt</StatusLine>
      <Workspace>
        <Inspector />
        <Zone $w={1500}>
          <Arrange />
          <Mixer />
          <TabRow $h={20}>
            <Tab $w={20} $pt={1}><Icon n="cross" s={13} c="#d0d3d5" /></Tab><Tab $w={102} $on $bottom>MixConsole</Tab><Tab $w={71} $pt={5}>Editor</Tab><Tab $w={126} $pt={5}>Sampler Control</Tab><Tab $w={107} $pt={5}>Akkord-Pads</Tab><Tab $w={20} $pt={1}><Icon n="gear" s={13} c="#c9ccce" /></Tab>
          </TabRow>
        </Zone>
        <VstRack />
      </Workspace>
      <TransportBar />
      <Taskbar>
        {TaskIcons.map((t, i) => <TaskCell key={i} $w={t.w} $ml={t.ml} $run={t.run} $on={t.on}><svg width="24" height="24" viewBox="0 0 24 24">{t.g}</svg></TaskCell>)}
        <Tray>
          <TrayCell $w={24}><svg width="13" height="8"><path d="M1 7l5.500-5.500L12 7" fill="none" stroke="#fff" strokeWidth="1.300" /></svg></TrayCell>
          <TrayCell $w={24}><svg width="17" height="14"><path d="M1 1h4v4H1zM6 2.500h10v7.500H4V6M10 10v3M6 13h8" fill="none" stroke="#fff" strokeWidth="1.200" /></svg></TrayCell>
          <TrayCell $w={24}><Icon n="speaker" w={17} h={15} /></TrayCell>
          <TrayCell $w={24}><svg width="14" height="13" viewBox="3 4 18 16"><path d="M8 5l4 2.500L8 10 4 7.500zM16 5l4 2.500L16 10l-4-2.500zM8 10l4 2.500L8 15l-4-2.500zM16 10l4 2.500-4 2.500-4-2.500zM12 14l4 2.500-4 2.500-4-2.500z" fill="#fff" /></svg></TrayCell>
          <TrayCell $w={36}>РУС</TrayCell>
          <TrayCell $w={66}><span>15:14</span><span>18.04.2019</span></TrayCell>
          <TrayCell $w={40}><svg width="17" height="16"><path d="M1 1h15v11h-5l-2.500 3L6 12H1z" fill="none" stroke="#fff" strokeWidth="1.300" /></svg></TrayCell>
          <TrayCell $w={9} />
        </Tray>
      </Taskbar>
      <ChannelSettings />
    </Screen>
  );
}
